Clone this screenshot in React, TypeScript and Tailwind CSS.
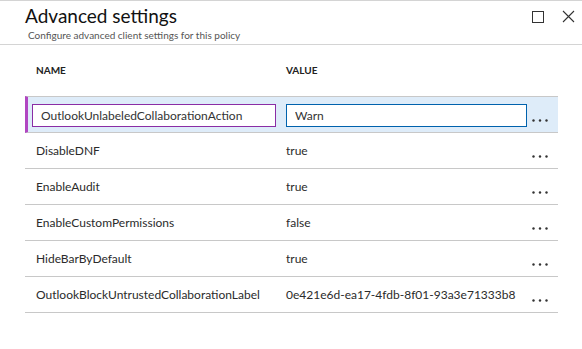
import { useState } from 'react';

type Setting = { name: string; value: string };

const settings: Setting[] = [
  { name: 'DisableDNF', value: 'true' },
  { name: 'EnableAudit', value: 'true' },
  { name: 'EnableCustomPermissions', value: 'false' },
  { name: 'HideBarByDefault', value: 'true' },
  { name: 'OutlookBlockUntrustedCollaborationLabel', value: '0e421e6d-ea17-4fdb-8f01-93a3e71333b8' },
];

function MoreDots() {
  return (
    <svg width="16" height="3" viewBox="0 0 16 3" className="mt-[11px]">
      <circle cx="1.5" cy="1.5" r="1.2" fill="#333" />
      <circle cx="8" cy="1.5" r="1.2" fill="#333" />
      <circle cx="14.5" cy="1.5" r="1.2" fill="#333" />
    </svg>
  );
}

export default function App() {
  const [name, setName] = useState('OutlookUnlabeledCollaborationAction');
  const [value, setValue] = useState('Warn');

  return (
    <div
      className="w-[582px] h-[349px] bg-white text-[#2b2b2b] overflow-hidden"
      style={{ fontFamily: 'Lato, "Liberation Sans", sans-serif' }}
    >
      {/* Header */}
      <header className="h-[45px] border-t border-b border-[#d4d4d4] flex items-start justify-between">
        <div className="pl-[25px]">
          <h1 className="text-[19px] leading-[24px] mt-[3px] text-[#111]">Advanced settings</h1>
          <p className="text-[10px] leading-[12px] mt-[1px] text-[#555] pl-[3px]">Configure advanced client settings for this policy</p>
        </div>
        <div className="flex items-center gap-[18px] pr-[7px] pt-[9px]">
          <div className="w-[12px] h-[12px] border border-[#333]" />
          <svg width="13" height="13" viewBox="0 0 13 13">
            <path d="M1 1 L12 12 M12 1 L1 12" stroke="#333" strokeWidth="1.1" />
          </svg>
        </div>
      </header>

      <main className="pl-[25px] w-[558px]">
        {/* Column headers */}
        <div className="flex h-[51px] items-center text-[10px] font-bold text-[#222]">
          <div className="w-[255px] pl-[11px]">NAME</div>
          <div className="pl-[6px]">VALUE</div>
        </div>

        {/* Selected row */}
        <div className="flex h-[37px] items-center bg-[#deecf9] border-y border-[#c8c8c8] border-l-[3px] border-l-[#b146c2]">
          <div className="w-[252px] pl-[4px]">
            <input
              value={name}
              onChange={e => setName(e.target.value)}
              className="w-[244px] h-[23px] border border-[#8a2da5] bg-white px-[8px] text-[12px] text-[#333] outline-none"
            />
          </div>
          <div className="w-[246px] pl-[6px]">
            <input
              value={value}
              onChange={e => setValue(e.target.value)}
              className="w-[241px] h-[23px] border border-[#0062ad] bg-white px-[8px] text-[12px] text-[#333] outline-none"
            />
          </div>
          <div className="flex-1 flex justify-center pr-[4px]">
            <MoreDots />
          </div>
        </div>

        {settings.map(s => (
          <div key={s.name} className="flex h-[36px] items-center border-b border-[#c8c8c8] text-[12px]">
            <div className="w-[255px] pl-[11px] whitespace-nowrap">{s.name}</div>
            <div className="w-[246px] pl-[6px] whitespace-nowrap">{s.value}</div>
            <div className="flex-1 flex justify-center pr-[4px]">
              <MoreDots />
            </div>
          </div>
        ))}
      </main>
    </div>
  );
}
